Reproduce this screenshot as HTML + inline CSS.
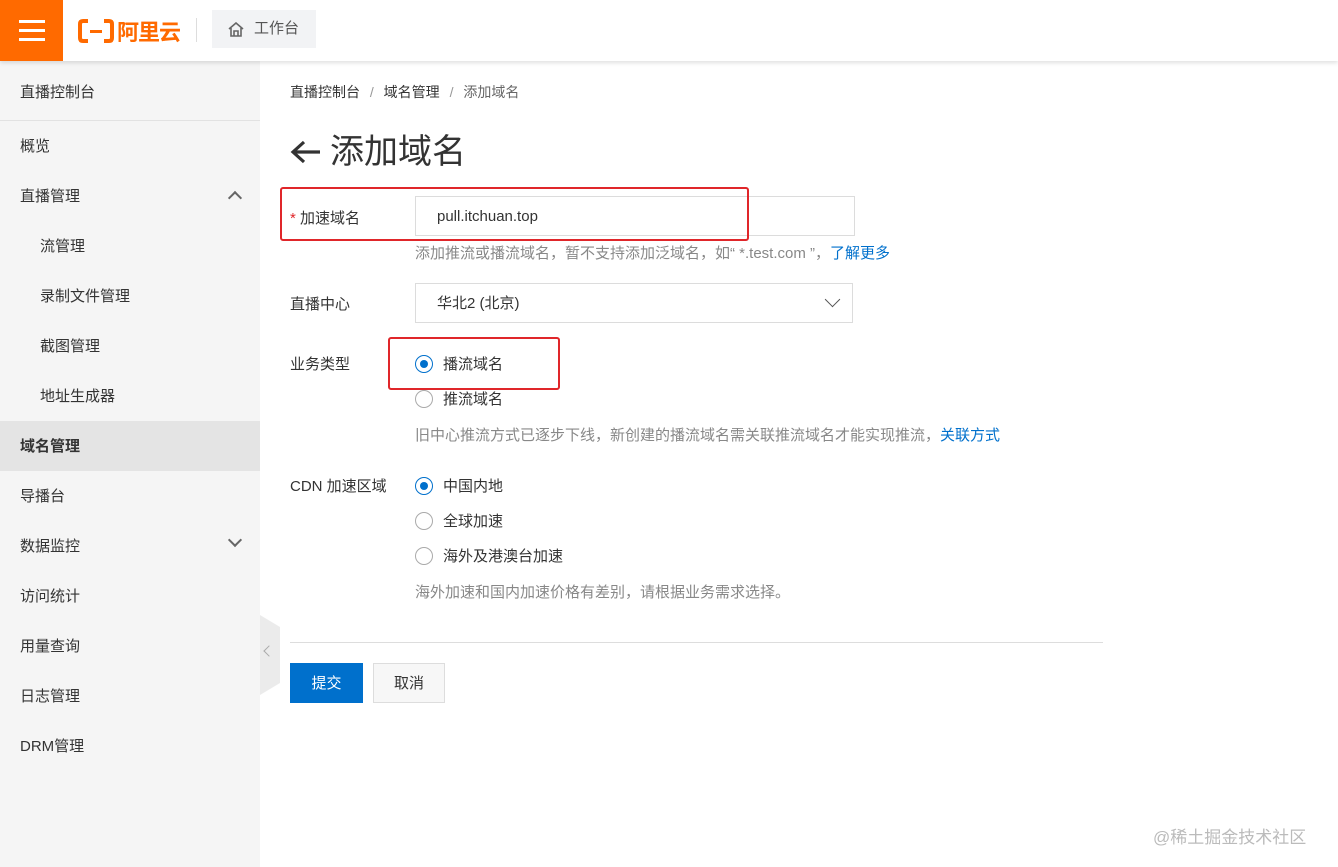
<!DOCTYPE html>
<html><head><meta charset="utf-8"><style>
*{margin:0;padding:0;box-sizing:border-box}
body{width:1338px;height:867px;overflow:hidden;background:#fff;font-family:"Liberation Sans","Noto Sans CJK SC",sans-serif;font-size:14px;color:#333;position:relative}
.top{position:absolute;left:0;top:0;width:1338px;height:61px;background:#fff;box-shadow:0 2px 4px rgba(0,0,0,.12);z-index:2}
.ham{position:absolute;left:0;top:0;width:63px;height:61px;background:#ff6a00}
.ham i{position:absolute;left:19px;width:26px;height:3px;background:#fff}
.logo{position:absolute;left:78px;top:15px;color:#ff6a00;font-weight:bold;font-size:22px;display:flex;align-items:center}
.sep{position:absolute;left:196px;top:18px;width:1px;height:24px;background:#ddd}
.wt{position:absolute;left:212px;top:10px;width:104px;height:38px;background:#f2f3f5;color:#555;font-size:15px;line-height:38px;padding-left:42px}
.side{position:absolute;left:0;top:61px;width:260px;height:806px;background:#f5f5f5}
.side div{height:50px;line-height:52px;padding-left:20px;font-size:15px;color:#333;position:relative}
.side .sub{padding-left:40px}
.side .act{background:#e4e4e4;font-weight:bold}
.side .hd{border-bottom:1px solid #e2e2e2;height:60px;line-height:64px}
.chev{position:absolute;right:20px;top:18px;width:10px;height:10px;border-left:2px solid #666;border-top:2px solid #666}
.tab{position:absolute;left:260px;top:615px;width:20px;height:80px;background:#ebebeb;clip-path:polygon(0 0,100% 15%,100% 85%,0 100%)}
.main{position:absolute;left:290px}
.lbl{position:absolute;left:290px;font-size:15px;color:#333}
.inp{position:absolute;border:1px solid #dcdcdc;background:#fff;font-size:15px;padding-left:21px}
.hint{position:absolute;left:415px;font-size:15px;color:#888;white-space:nowrap}
.hint a{color:#0070cc;text-decoration:none}
.red{position:absolute;border:2px solid #e0262a;border-radius:3px}
.rad{position:absolute;left:415px;font-size:15px;color:#333}
.rad b{position:absolute;left:0;top:1px;width:18px;height:18px;border:1px solid #aaa;border-radius:50%;background:#fff}
.rad b.on{border-color:#0070cc}
.rad b.on:after{content:"";position:absolute;left:4px;top:4px;width:8px;height:8px;border-radius:50%;background:#0070cc}
.rad span{position:absolute;left:28px;top:-1px;white-space:nowrap}
</style></head><body>
<div class="top">
<div class="ham"><i style="top:20px"></i><i style="top:29px"></i><i style="top:38px"></i></div>
<div class="logo"><svg width="36" height="26" viewBox="0 0 36 26"><path d="M10 3H5Q2 3 2 6V20Q2 23 5 23H10M26 3H31Q34 3 34 6V20Q34 23 31 23H26" fill="none" stroke="#ff6a00" stroke-width="4"/><rect x="12" y="12" width="12" height="3" fill="#ff6a00"/></svg><span style="margin-left:3px;letter-spacing:-1px">阿里云</span></div>
<div class="sep"></div>
<div class="wt"><svg style="position:absolute;left:16px;top:12px" width="16" height="15" viewBox="0 0 16 15"><path d="M1 7L8 1L15 7M3 6V14H13V6M6 14V9H10V14" fill="none" stroke="#666" stroke-width="1.6"/></svg>工作台</div>
</div>
<div class="side">
<div class="hd">直播控制台</div>
<div>概览</div>
<div>直播管理<span class="chev" style="transform:rotate(45deg);top:22px"></span></div>
<div class="sub">流管理</div>
<div class="sub">录制文件管理</div>
<div class="sub">截图管理</div>
<div class="sub">地址生成器</div>
<div class="act">域名管理</div>
<div>导播台</div>
<div>数据监控<span class="chev" style="transform:rotate(225deg);top:14px"></span></div>
<div>访问统计</div>
<div>用量查询</div>
<div>日志管理</div>
<div>DRM管理</div>
</div>
<div class="tab"><span style="position:absolute;left:5px;top:32px;width:8px;height:8px;border-left:1.5px solid #aaa;border-bottom:1.5px solid #aaa;transform:rotate(45deg)"></span></div>
<div class="main" style="top:82px;font-size:14px;color:#333">直播控制台 <span style="color:#999;margin:0 6px">/</span> 域名管理 <span style="color:#999;margin:0 6px">/</span> <span style="color:#666">添加域名</span></div>
<svg style="position:absolute;left:290px;top:139px" width="32" height="26" viewBox="0 0 32 26"><path d="M30 13H4M14 3L3 13L14 23" fill="none" stroke="#333" stroke-width="3.2"/></svg>
<div class="main" style="left:330px;top:130px;font-size:34px;color:#333;line-height:44px">添加域名</div>
<div class="lbl" style="top:207px"><span style="color:#e0262a">* </span>加速域名</div>
<div class="inp" style="left:415px;top:196px;width:440px;height:40px;line-height:40px">pull.itchuan.top</div>
<div class="red" style="left:280px;top:187px;width:469px;height:54px"></div>
<div class="hint" style="top:242px">添加推流或播流域名，暂不支持添加泛域名，如“ *.test.com ”，<a>了解更多</a></div>
<div class="lbl" style="top:293px">直播中心</div>
<div class="inp" style="left:415px;top:283px;width:438px;height:40px;line-height:40px">华北2 (北京)<span style="position:absolute;right:14px;top:10px;width:11px;height:11px;border-right:1.5px solid #555;border-bottom:1.5px solid #555;transform:rotate(45deg)"></span></div>
<div class="lbl" style="top:353px">业务类型</div>
<div class="rad" style="top:354px"><b class="on"></b><span>播流域名</span></div>
<div class="rad" style="top:389px"><b></b><span>推流域名</span></div>
<div class="red" style="left:388px;top:337px;width:172px;height:53px"></div>
<div class="hint" style="top:424px">旧中心推流方式已逐步下线，新创建的播流域名需关联推流域名才能实现推流，<a>关联方式</a></div>
<div class="lbl" style="top:475px">CDN 加速区域</div>
<div class="rad" style="top:476px"><b class="on"></b><span>中国内地</span></div>
<div class="rad" style="top:511px"><b></b><span>全球加速</span></div>
<div class="rad" style="top:546px"><b></b><span>海外及港澳台加速</span></div>
<div class="hint" style="top:581px">海外加速和国内加速价格有差别，请根据业务需求选择。</div>
<div style="position:absolute;left:290px;top:642px;width:813px;height:1px;background:#ddd"></div>
<div style="position:absolute;left:290px;top:663px;width:73px;height:40px;background:#0070cc;color:#fff;font-size:15px;text-align:center;line-height:42px">提交</div>
<div style="position:absolute;left:373px;top:663px;width:72px;height:40px;background:#f7f7f7;border:1px solid #ddd;color:#333;font-size:15px;text-align:center;line-height:40px">取消</div>
<div style="position:absolute;left:1153px;top:823px;font-size:17px;color:#bbb">@稀土掘金技术社区</div>
</body></html>
